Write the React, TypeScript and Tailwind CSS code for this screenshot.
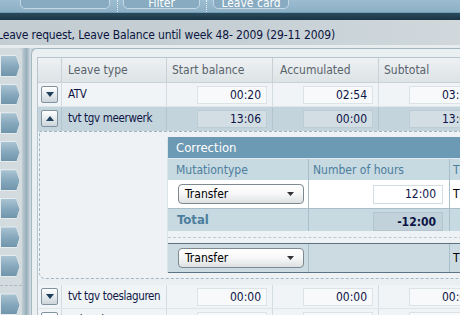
import React from "react";

const FONT = "font-['DejaVu_Sans_Condensed','DejaVu_Sans',sans-serif] [font-stretch:condensed]";

function Tab() {
  return (
    <div className="h-[23px] w-[20px] [clip-path:polygon(0_0,16px_0,20px_11.5px,16px_23px,0_23px)] bg-[#e4ecf0] p-[1px] pr-0">
      <div className="h-full w-full [clip-path:polygon(0_0,15px_0,18.5px_10.5px,15px_21px,0_21px)] bg-gradient-to-b from-[#aac4d3] via-[#88a9bd] to-[#7095ab]" />
    </div>
  );
}

function ExpBtn({ up }: { up?: boolean }) {
  return (
    <div className="w-[17px] h-[17px] rounded-[2px] border border-[#7f929d] bg-gradient-to-b from-white to-[#cdd6db] flex items-center justify-center">
      <svg width="8" height="5" viewBox="0 0 8 5">
        {up ? <path d="M0 5 L4 0 L8 5 Z" fill="#1d3f5c" /> : <path d="M0 0 L8 0 L4 5 Z" fill="#1d3f5c" />}
      </svg>
    </div>
  );
}

function Row({ name, vals, up, sel }: { name: string; vals: string[]; up?: boolean; sel?: boolean }) {
  return (
    <div
      className={`grid grid-cols-[24px_105px_106px_106px_106px] h-[24px] border-b ${
        sel ? "bg-[#c4d4dc] border-[#c4d4dc]" : "bg-[#f1f4f6] border-[#dfe6ea]"
      }`}
    >
      <div className={`flex items-center justify-center border-r ${sel ? "border-[#b2c4ce]" : "border-[#d3dce1]"}`}>
        <ExpBtn up={up} />
      </div>
      <div
        className={`flex items-center pl-[6px] text-[11.5px] tracking-[-0.35px] text-[#0e1445] whitespace-nowrap overflow-hidden border-r ${
          sel ? "border-[#b2c4ce]" : "border-[#d3dce1]"
        }`}
      >
        {name}
      </div>
      {vals.map((v, i) => (
        <div key={i} className={`flex items-center justify-end pr-[5px] border-r ${sel ? "border-[#b2c4ce]" : "border-[#d3dce1]"}`}>
          <div
            className={`w-[70px] h-[18px] border flex items-center justify-end pr-[5px] text-[12px] text-[#0e1445] ${
              sel ? "bg-[#d2dee4] border-[#bccdd5]" : "bg-[#f7f9fa] border-[#dbe3e7]"
            }`}
          >
            {v}
          </div>
        </div>
      ))}
    </div>
  );
}

function Select() {
  return (
    <div className="w-[126px] h-[20px] rounded-[4px] border border-[#7e8a92] bg-gradient-to-b from-white via-[#f7f7f7] to-[#dde1e3] flex items-center justify-between pl-[6px] pr-[9px] text-[12px] text-black">
      <span>Transfer</span>
      <svg width="7" height="4" viewBox="0 0 7 4">
        <path d="M0 0 L7 0 L3.5 4 Z" fill="#333" />
      </svg>
    </div>
  );
}

export default function App() {
  return (
    <div className={`w-[460px] h-[315px] overflow-hidden bg-[#c9d3d8] ${FONT}`}>
      {/* top bar */}
      <div className="h-[12px] bg-gradient-to-b from-[#9cbcd0] to-[#8db0c6] relative overflow-hidden">
        <div className="absolute left-[20px] top-[-14px] w-[90px] h-[23px] rounded-b-[5px] border border-[#c4d8e4] bg-[#88abc1]" />
        <div className="absolute left-[117px] top-[0px] h-[12px] border-l border-dotted border-[#e3edf3]" />
        <div className="absolute left-[123px] top-[-14px] w-[77px] h-[23px] rounded-b-[5px] border border-[#c4d8e4] bg-[#88abc1] flex items-end justify-center text-white text-[12px] leading-[10px]">
          Filter
        </div>
        <div className="absolute left-[206px] top-[0px] h-[12px] border-l border-dotted border-[#e3edf3]" />
        <div className="absolute left-[213px] top-[-14px] w-[76px] h-[23px] rounded-b-[5px] border border-[#c4d8e4] bg-[#88abc1] flex items-end justify-center text-white text-[12px] leading-[10px]">
          Leave card
        </div>
      </div>
      {/* dark band */}
      <div className="h-[8px] border-t border-[#6f9bb4] bg-gradient-to-b from-[#2a4b5d] to-[#1a3444]" />
      {/* title */}
      <div className="h-[25px] bg-gradient-to-r from-[#c3cdd2] via-[#c6d0d4] to-[#d0d8dc] flex items-center pt-[4px] overflow-hidden">
        <span className="-ml-[3px] text-[12px] tracking-[-0.15px] text-[#0c1440] whitespace-nowrap">
          Leave request, Leave Balance until week 48- 2009 (29-11 2009)
        </span>
      </div>
      <div className="h-[3px] bg-[#e7ecee]" />
      {/* body */}
      <div className="flex h-[267px]">
        <div className="w-[22px] bg-[#d3dbdf] rounded-tr-[5px] flex flex-col pt-[7px] gap-[7px] overflow-hidden">
          <Tab />
          <Tab />
          <Tab />
          <Tab />
          <Tab />
          <Tab />
          <Tab />
          <Tab />
          <div className="h-[2px] mt-[1px] border-t border-dashed border-[#a9b9c2]" />
          <Tab />
        </div>
        <div className="w-[9px] bg-gradient-to-r from-[#c0cdd3] via-[#98afbc] to-[#d8e0e4]" />
        <div className="flex-1 rounded-tl-[6px] border-l border-t border-[#a2b7c2] bg-[#eaeff2] pl-[5px] pt-[8px] overflow-hidden">
          <div className="border-l border-t border-[#b7c6ce] bg-[#f1f4f6] w-[500px]">
            {/* header */}
            <div className="grid grid-cols-[24px_105px_106px_106px_106px] h-[25px] border-b border-[#c8d1d6] bg-gradient-to-b from-[#eef1f3] to-[#dde3e6] text-[12px] text-[#58636b]">
              <div className="border-r border-[#c8d1d6]" />
              <div className="border-r border-[#c8d1d6] flex items-center pl-[6px]">Leave type</div>
              <div className="border-r border-[#c8d1d6] flex items-center pl-[5px]">Start balance</div>
              <div className="border-r border-[#c8d1d6] flex items-center pl-[7px]">Accumulated</div>
              <div className="border-r border-[#c8d1d6] flex items-center pl-[5px]">Subtotal</div>
            </div>
            <Row name="ATV" vals={["00:20", "02:54", "03:14"]} />
            <Row name="tvt tgv meerwerk" vals={["13:06", "00:00", "13:06"]} up sel />
            {/* expanded */}
            <div className="border-t border-dashed border-[#9fb3be] bg-[#eef2f5] ml-[1px] border-l border-b border-l-[#a4b8c3] border-b-[#a4b8c3] rounded-bl-[6px] pl-[127px] pt-[5px] pb-[5px]">
              <div className="w-[340px] border-l border-[#dbe4e9]">
                <div className="h-[21px] bg-[#6c99b3] text-white text-[13px] flex items-center pl-[8px]">Correction</div>
                <div className="grid grid-cols-[141px_141px_1fr] h-[22px] bg-[#c7d9e1] text-[12px] text-[#4c7e9d] border-t border-[#dfe9ee]">
                  <div className="border-r border-[#a8bfcb] flex items-center pl-[8px]">Mutationtype</div>
                  <div className="border-r border-[#a8bfcb] flex items-center pl-[4px]">Number of hours</div>
                  <div className="flex items-center pl-[3px]">T</div>
                </div>
                <div className="grid grid-cols-[141px_141px_1fr] h-[29px] bg-white border-b border-[#a8bfcb] text-[12px]">
                  <div className="border-r border-[#a8bfcb] flex items-center pl-[10px]">
                    <Select />
                  </div>
                  <div className="border-r border-[#a8bfcb] flex items-center justify-end pr-[6px]">
                    <div className="w-[70px] h-[19px] border border-[#d3dee4] bg-white flex items-center justify-end pr-[6px] text-[#0e1445]">12:00</div>
                  </div>
                  <div className="flex items-center pl-[3px] text-black">T</div>
                </div>
                <div className="grid grid-cols-[141px_141px_1fr] h-[22px] bg-[#c7d9e1] text-[12px]">
                  <div className="border-r border-[#a8bfcb] flex items-center pl-[9px] font-bold text-[13px] text-[#4c7e9d]">Total</div>
                  <div className="border-r border-[#a8bfcb] flex items-end justify-end pr-[6px]">
                    <div className="w-[70px] h-[19px] border border-[#b3c6cf] bg-[#c1d2da] flex items-center justify-end pr-[6px] font-bold text-[#0e1445]">-12:00</div>
                  </div>
                  <div />
                </div>
                <div className="h-[12px] flex items-center">
                  <div className="w-full border-t border-dashed border-[#bccad1]" />
                </div>
                <div className="grid grid-cols-[141px_141px_1fr] h-[30px] bg-[#ccdae1] border-y border-[#5b7384] text-[12px]">
                  <div className="border-r border-[#a8bfcb] flex items-center pl-[10px]">
                    <Select />
                  </div>
                  <div className="border-r border-[#a8bfcb]" />
                  <div className="flex items-center pl-[3px] text-black">T</div>
                </div>
              </div>
            </div>
            <div className="h-[6px] bg-[#eaeff2]" />
            <Row name="tvt tgv toeslaguren" vals={["00:00", "00:00", "00:00"]} />
            <Row name="Vakantie" vals={["21:22", "02:00", "20:22"]} />
          </div>
        </div>
      </div>
    </div>
  );
}
